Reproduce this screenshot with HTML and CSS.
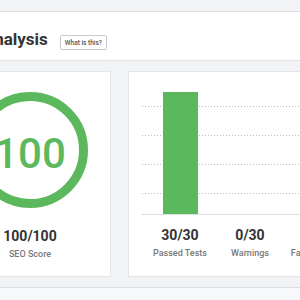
FILE: index.html
```html
<!DOCTYPE html>
<html lang="en">

<head>
    <title>SEO Analysis</title>
    <meta charset="UTF-8">
    <meta name="viewport" content="width=device-width, initial-scale=1">
    <link rel="stylesheet" href="styles.css">
</head>

<body>
    <div class="page">
        <div class="header">
            <h1>Analysis</h1>
            <span class="help">What is this?</span>
        </div>

        <div class="cards">
            <!-- score -->
            <div class="card score-card">
                <div class="ring">100</div>
                <div class="value">100/100</div>
                <div class="label">SEO Score</div>
            </div>

            <!-- tests chart -->
            <div class="card tests-card">
                <div class="chart">
                    <div class="grid">
                        <div></div>
                        <div></div>
                        <div></div>
                        <div></div>
                    </div>
                    <div class="bars">
                        <div class="col"><div class="bar pass" style="height: 100%"></div></div>
                        <div class="col"><div class="bar warn" style="height: 0%"></div></div>
                        <div class="col"><div class="bar fail" style="height: 0%"></div></div>
                    </div>
                </div>
                <div class="stats">
                    <div class="stat">
                        <div class="value">30/30</div>
                        <div class="label">Passed Tests</div>
                    </div>
                    <div class="stat">
                        <div class="value">0/30</div>
                        <div class="label">Warnings</div>
                    </div>
                    <div class="stat last">
                        <div class="value red">0/30</div>
                        <div class="label">Failed Tests</div>
                    </div>
                </div>
            </div>
        </div>

        <div class="footer"></div>
    </div>
</body>

</html>
```

FILE: styles.css
```css
* {
    margin: 0;
    padding: 0;
    box-sizing: border-box;
}

body {
    background: #f2f3f5;
    font-family: Roboto, "Liberation Sans", sans-serif;
    color: #333;
    overflow: hidden;
}

.page {
    width: 440px;
    margin-left: -51px;
    padding-top: 11px;
}

.header {
    height: 50px;
    background: #fff;
    border-top: 1px solid #dcdde2;
    border-bottom: 1px solid #e3e4e8;
    display: flex;
    align-items: flex-end;
    padding: 0 0 10px 34px;
}

.header h1 {
    font-size: 17px;
    line-height: 20px;
    font-weight: 700;
    color: #333;
    margin-bottom: 1px;
}

.help {
    margin-left: 12px;
    height: 15px;
    padding: 0 4px;
    display: flex;
    align-items: center;
    font-size: 6.5px;
    font-weight: 500;
    color: #555;
    background: #fff;
    border: 1px solid #c9cacd;
    border-radius: 2px;
}

.cards {
    display: flex;
    gap: 17px;
    margin-top: 10px;
}

.card {
    height: 206px;
    background: #fff;
    border: 1px solid #e4e5e9;
}

.score-card {
    width: 162px;
    display: flex;
    flex-direction: column;
    align-items: center;
    padding-top: 20px;
}

.ring {
    width: 116px;
    height: 116px;
    border: 9px solid #5cb85c;
    border-radius: 50%;
    display: flex;
    justify-content: center;
    align-items: center;
    padding-top: 7px;
    font-size: 42px;
    line-height: 1;
    font-weight: 500;
    color: #5cb85c;
}

.value {
    font-size: 14px;
    line-height: 17px;
    font-weight: 700;
    color: #333;
}

.score-card .value {
    margin-top: 20px;
}

.label {
    margin-top: 3px;
    font-size: 9px;
    line-height: 12px;
    font-weight: 500;
    color: #777;
}

.tests-card {
    width: 260px;
    padding: 20px 0 0 12px;
}

.chart {
    display: grid;
    height: 123px;
    border-bottom: 1px solid #dfe0e3;
}

.grid,
.bars {
    grid-area: 1 / 1;
}

.grid {
    padding-top: 14px;
    display: grid;
    grid-template-rows: 29px 29px 29px 21px;
}

.grid div {
    margin-left: 1px;
    background-image: linear-gradient(to right, #bdbdbd 1px, transparent 1px);
    background-size: 3px 1px;
    background-repeat: repeat-x;
}

.bars {
    display: flex;
    padding-left: 4px;
}

.col {
    width: 70px;
    display: flex;
    justify-content: center;
    align-items: flex-end;
}

.bar {
    width: 35px;
}

.pass {
    background: #5cb85c;
}

.warn {
    background: #f0ad4e;
}

.fail {
    background: #d9534f;
}

.stats {
    display: flex;
    padding-left: 4px;
    margin-top: 12px;
}

.stat {
    width: 70px;
    text-align: center;
}

.stat.last {
    width: 60px;
}

.red {
    color: #d9534f;
}

.footer {
    height: 40px;
    margin-top: 10px;
    background: #f7f8f9;
    border-top: 1px solid #dcdde2;
}
```
